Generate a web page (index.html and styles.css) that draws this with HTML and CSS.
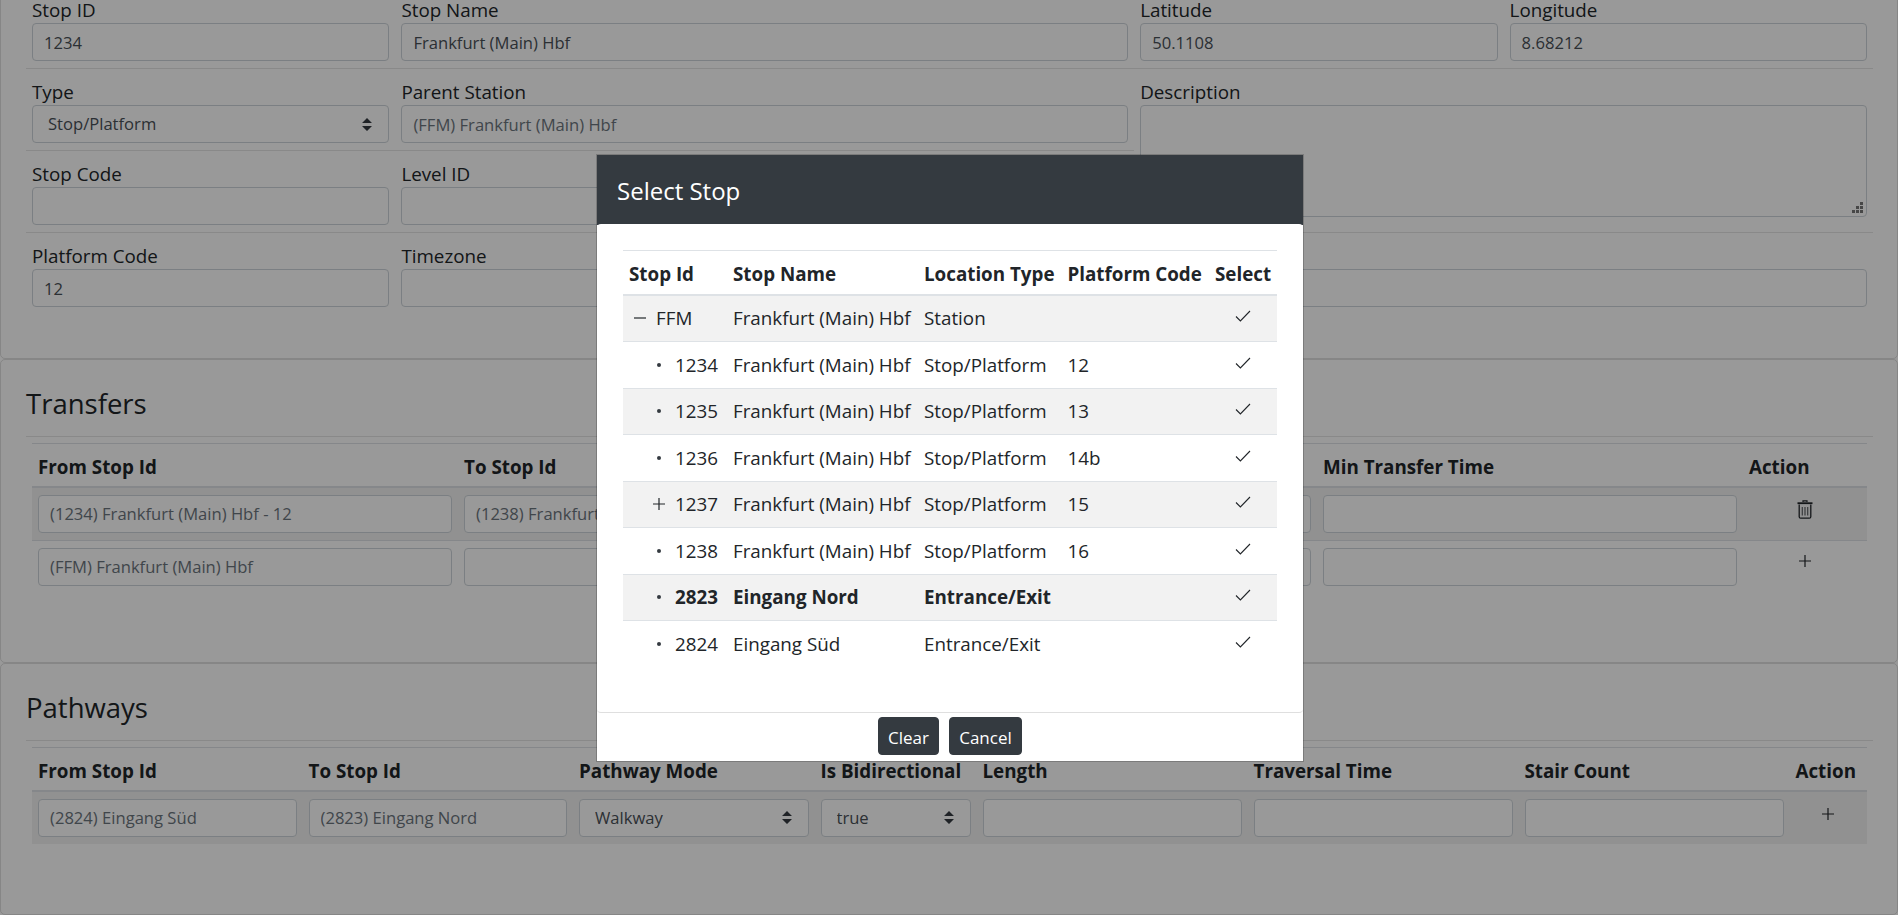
FILE: index.html

```html
<!DOCTYPE html>
<html lang="en">
<head>
  <meta charset="UTF-8">
  <meta name="viewport" content="width=device-width, initial-scale=1.0">
  <title>Stop Editor</title>
  <link rel="stylesheet" href="styles.css">
</head>
<body>
  <div class="page">
    <section class="card card-stop">
      <div class="form-grid">
        <div class="field"><label>Stop ID</label><input class="control" value="1234"></div>
        <div class="field span-2"><label>Stop Name</label><input class="control" value="Frankfurt (Main) Hbf"></div>
        <div class="field"><label>Latitude</label><input class="control" value="50.1108"></div>
        <div class="field"><label>Longitude</label><input class="control" value="8.68212"></div>
      </div>
      <hr class="rule">
      <div class="form-split">
        <div class="form-left">
          <div class="form-grid-3">
            <div class="field">
              <label>Type</label>
              <select class="control select"><option>Stop/Platform</option></select>
            </div>
            <div class="field span-2"><label>Parent Station</label><input class="control muted" value="(FFM) Frankfurt (Main) Hbf"></div>
          </div>
          <hr class="rule">
          <div class="form-grid-3">
            <div class="field"><label>Stop Code</label><input class="control"></div>
            <div class="field span-2"><label>Level ID</label><input class="control"></div>
          </div>
        </div>
        <div class="field form-right">
          <label>Description</label>
          <textarea class="control description"></textarea>
        </div>
      </div>
      <hr class="rule">
      <div class="form-grid">
        <div class="field"><label>Platform Code</label><input class="control" value="12"></div>
        <div class="field span-2"><label>Timezone</label><input class="control"></div>
        <div class="field span-2"><label></label><input class="control"></div>
      </div>
    </section>

    <section class="card card-list">
      <h3>Transfers</h3>
      <hr class="rule rule-title">
      <table class="grid-table transfers">
        <colgroup>
          <col class="t-from"><col class="t-to"><col class="t-type"><col class="t-from"><col>
        </colgroup>
        <thead>
          <tr><th>From Stop Id</th><th>To Stop Id</th><th></th><th>Min Transfer Time</th><th>Action</th></tr>
        </thead>
        <tbody>
          <tr>
            <td><input class="control muted" value="(1234) Frankfurt (Main) Hbf - 12"></td>
            <td><input class="control muted" value="(1238) Frankfurt (Main) Hbf - 16"></td>
            <td><input class="control"></td>
            <td><input class="control"></td>
            <td class="action">
              <svg class="icon-trash" width="16" height="19" viewBox="0 0 16 19" fill="none" stroke="currentColor">
                <path d="M6 2V.8h4V2" stroke-width="1.2"/>
                <path d="M.5 3.2h15" stroke-width="1.8"/>
                <path d="M2.2 4.5v12.2c0 .9.6 1.5 1.5 1.5h8.6c.9 0 1.5-.6 1.5-1.5V4.5" stroke-width="1.3"/>
                <path d="M5.3 7v8.5M8 7v8.5M10.7 7v8.5" stroke-width="1.2" opacity=".7"/>
              </svg>
            </td>
          </tr>
          <tr>
            <td><input class="control muted" value="(FFM) Frankfurt (Main) Hbf"></td>
            <td><input class="control"></td>
            <td><input class="control"></td>
            <td><input class="control"></td>
            <td class="action">
              <svg class="icon-plus" width="12" height="12" viewBox="0 0 12 12"><path d="M6 0v12M0 6h12" stroke="currentColor" stroke-width="1.2"/></svg>
            </td>
          </tr>
        </tbody>
      </table>
    </section>

    <section class="card card-list card-last">
      <h3>Pathways</h3>
      <hr class="rule rule-title">
      <table class="grid-table pathways">
        <colgroup>
          <col class="p-wide"><col class="p-wide"><col class="p-mode"><col class="p-bidi"><col class="p-tail"><col class="p-tail"><col class="p-tail"><col>
        </colgroup>
        <thead>
          <tr><th>From Stop Id</th><th>To Stop Id</th><th>Pathway Mode</th><th>Is Bidirectional</th><th>Length</th><th>Traversal Time</th><th>Stair Count</th><th>Action</th></tr>
        </thead>
        <tbody>
          <tr>
            <td><input class="control muted" value="(2824) Eingang Süd"></td>
            <td><input class="control muted" value="(2823) Eingang Nord"></td>
            <td><select class="control select"><option>Walkway</option></select></td>
            <td><select class="control select"><option>true</option></select></td>
            <td><input class="control"></td>
            <td><input class="control"></td>
            <td><input class="control"></td>
            <td class="action">
              <svg class="icon-plus" width="12" height="12" viewBox="0 0 12 12"><path d="M6 0v12M0 6h12" stroke="currentColor" stroke-width="1.2"/></svg>
            </td>
          </tr>
        </tbody>
      </table>
    </section>
  </div>

  <div class="backdrop"></div>

  <div class="modal">
    <header class="modal-header">Select Stop</header>
    <div class="modal-body">
      <table class="stop-table">
        <colgroup>
          <col class="s-id"><col class="s-name"><col class="s-type"><col class="s-code"><col>
        </colgroup>
        <thead>
          <tr><th>Stop Id</th><th>Stop Name</th><th>Location Type</th><th>Platform Code</th><th>Select</th></tr>
        </thead>
        <tbody>
          <tr>
            <td><span class="tree tree-root"><svg class="tree-icon" width="12" height="12" viewBox="0 0 12 12"><path d="M0 6h12" stroke="currentColor" stroke-width="1.2"/></svg>FFM</span></td>
            <td>Frankfurt (Main) Hbf</td><td>Station</td><td></td>
            <td class="pick"><svg width="16" height="12" viewBox="0 0 16 12" fill="none"><path d="M1 6.5l4.4 4.4L15 1" stroke="currentColor" stroke-width="1.1"/></svg></td>
          </tr>
          <tr>
            <td><span class="tree"><span class="tree-icon tree-dot"></span>1234</span></td>
            <td>Frankfurt (Main) Hbf</td><td>Stop/Platform</td><td>12</td>
            <td class="pick"><svg width="16" height="12" viewBox="0 0 16 12" fill="none"><path d="M1 6.5l4.4 4.4L15 1" stroke="currentColor" stroke-width="1.1"/></svg></td>
          </tr>
          <tr>
            <td><span class="tree"><span class="tree-icon tree-dot"></span>1235</span></td>
            <td>Frankfurt (Main) Hbf</td><td>Stop/Platform</td><td>13</td>
            <td class="pick"><svg width="16" height="12" viewBox="0 0 16 12" fill="none"><path d="M1 6.5l4.4 4.4L15 1" stroke="currentColor" stroke-width="1.1"/></svg></td>
          </tr>
          <tr>
            <td><span class="tree"><span class="tree-icon tree-dot"></span>1236</span></td>
            <td>Frankfurt (Main) Hbf</td><td>Stop/Platform</td><td>14b</td>
            <td class="pick"><svg width="16" height="12" viewBox="0 0 16 12" fill="none"><path d="M1 6.5l4.4 4.4L15 1" stroke="currentColor" stroke-width="1.1"/></svg></td>
          </tr>
          <tr>
            <td><span class="tree"><svg class="tree-icon" width="12" height="12" viewBox="0 0 12 12"><path d="M6 0v12M0 6h12" stroke="currentColor" stroke-width="1.2"/></svg>1237</span></td>
            <td>Frankfurt (Main) Hbf</td><td>Stop/Platform</td><td>15</td>
            <td class="pick"><svg width="16" height="12" viewBox="0 0 16 12" fill="none"><path d="M1 6.5l4.4 4.4L15 1" stroke="currentColor" stroke-width="1.1"/></svg></td>
          </tr>
          <tr>
            <td><span class="tree"><span class="tree-icon tree-dot"></span>1238</span></td>
            <td>Frankfurt (Main) Hbf</td><td>Stop/Platform</td><td>16</td>
            <td class="pick"><svg width="16" height="12" viewBox="0 0 16 12" fill="none"><path d="M1 6.5l4.4 4.4L15 1" stroke="currentColor" stroke-width="1.1"/></svg></td>
          </tr>
          <tr class="current">
            <td><span class="tree"><span class="tree-icon tree-dot"></span>2823</span></td>
            <td>Eingang Nord</td><td>Entrance/Exit</td><td></td>
            <td class="pick"><svg width="16" height="12" viewBox="0 0 16 12" fill="none"><path d="M1 6.5l4.4 4.4L15 1" stroke="currentColor" stroke-width="1.1"/></svg></td>
          </tr>
          <tr>
            <td><span class="tree"><span class="tree-icon tree-dot"></span>2824</span></td>
            <td>Eingang Süd</td><td>Entrance/Exit</td><td></td>
            <td class="pick"><svg width="16" height="12" viewBox="0 0 16 12" fill="none"><path d="M1 6.5l4.4 4.4L15 1" stroke="currentColor" stroke-width="1.1"/></svg></td>
          </tr>
        </tbody>
      </table>
    </div>
    <footer class="modal-footer">
      <button class="btn btn-clear">Clear</button>
      <button class="btn btn-cancel">Cancel</button>
    </footer>
  </div>
</body>
</html>
```

FILE: styles.css

```css
html, body { height: 100%; }
body { margin: 0; height: 915px; overflow: hidden; background: #fff; color: #212529; font-family: "Open Sans", sans-serif; font-size: 18.8px; line-height: 24px; }

/* the page is scrolled down a little, first card starts above the window */
.page { margin-top: -30px; }

.card { border: 1px solid rgba(0, 0, 0, .125); border-radius: 5px; padding: 27px 24px 0 25px; box-sizing: border-box; }
.card-stop { height: 389px; padding-top: 27px; }
.card-list { height: 304px; }
.card-last { height: 252px; }

.rule { border: 0; border-top: 1px solid rgba(0, 0, 0, .1); margin: 7px 0 11px; }
.rule-title { margin: 15px 0 6px; }

.form-grid { display: grid; grid-template-columns: repeat(5, 1fr); gap: 12px; padding: 0 6px; }
.form-grid-3 { display: grid; grid-template-columns: repeat(3, 1fr); gap: 12px; padding: 0 6px; }
.form-split { display: grid; grid-template-columns: 3fr 2fr; }
.form-right { padding: 0 6px; }
.span-2 { grid-column: span 2; }
.field label { display: block; height: 24px; margin-bottom: 1px; white-space: nowrap; }

.control { display: block; width: 100%; height: 38px; box-sizing: border-box; padding: 0 11px; border: 1px solid #ced4da; border-radius: 4px; background: #fff; color: #495057; font: 16.6px/24px "Open Sans", sans-serif; }
.muted { color: #6c757d; }
.select { appearance: none; -webkit-appearance: none; padding-left: 15px; background: #fff url("data:image/svg+xml,%3Csvg xmlns='http://www.w3.org/2000/svg' width='10' height='13' viewBox='0 0 10 13'%3E%3Cpath fill='%23343a40' d='M5 0L0 5h10zM5 13L0 8h10z'/%3E%3C/svg%3E") no-repeat right 16px center; }
.description { height: 112px; resize: none; background: #fff url("data:image/svg+xml,%3Csvg xmlns='http://www.w3.org/2000/svg' width='11' height='11' fill='%23777'%3E%3Crect x='8' y='0' width='3' height='3'/%3E%3Crect x='4' y='4' width='3' height='3'/%3E%3Crect x='8' y='4' width='3' height='3'/%3E%3Crect x='0' y='8' width='3' height='3'/%3E%3Crect x='4' y='8' width='3' height='3'/%3E%3Crect x='8' y='8' width='3' height='3'/%3E%3C/svg%3E") no-repeat right 3px bottom 3px; }

h3 { margin: 0; font-weight: 400; font-size: 27.5px; line-height: 34px; }

.grid-table { width: 1835px; margin-left: 6px; border-collapse: collapse; table-layout: fixed; border-top: 1px solid #dee2e6; }
.grid-table th { height: 43px; padding: 4px 6px 0; box-sizing: border-box; text-align: left; font-weight: 700; border-bottom: 2px solid #dee2e6; white-space: nowrap; }
.grid-table td { padding: 7px 6px; vertical-align: top; }
.grid-table tbody tr:nth-child(odd) { background: rgba(0, 0, 0, .05); }
.grid-table tbody tr + tr td { border-top: 1px solid #dee2e6; }
.grid-table .action { text-align: center; color: #212529; }
.icon-trash { display: block; margin: 5px auto 0; }
.icon-plus { display: block; margin: 9px auto 0; }
.grid-table tr + tr .icon-plus { margin-top: 7px; }

.t-from { width: 426px; }
.t-to { width: 430px; }
.t-type { width: 429px; }
.p-wide { width: 270.5px; }
.p-mode { width: 241.5px; }
.p-bidi { width: 162px; }
.p-tail { width: 271px; }

/* dialog on top */
.backdrop { position: fixed; inset: 0; background: rgba(0, 0, 0, .4); }
.modal { position: fixed; left: 596px; top: 154px; width: 708px; height: 608px; box-sizing: border-box; border: 1px solid rgba(0, 0, 0, .2); background: #fff; background-clip: padding-box; display: flex; flex-direction: column; }
.modal-header { height: 70px; flex: none; padding: 0 20px; background: #343a40; color: #fff; font-size: 24px; line-height: 72px; }
.modal-body { flex: 1; padding: 26px 26px 0; border-bottom: 1px solid #dfdfdf; border-radius: 4px; margin-top: -1px; background: #fff; }
.modal-footer { flex: none; height: 48px; display: flex; justify-content: center; align-items: flex-start; gap: 10px; padding-top: 4px; box-sizing: border-box; }

.stop-table { width: 654px; border-collapse: collapse; table-layout: fixed; border-top: 1px solid #dee2e6; }
.stop-table th { height: 44px; padding: 3px 6px 0; box-sizing: border-box; text-align: left; border-bottom: 2px solid #dee2e6; white-space: nowrap; }
.stop-table td { padding: 10.75px 6px; white-space: nowrap; border-top: 1px solid #dee2e6; }
.stop-table tbody tr:first-child td { border-top: 0; }
.stop-table tbody tr:nth-child(odd) { background: #f2f2f2; }
.stop-table .current td { font-weight: 700; }
.stop-table .pick { text-align: center; padding-right: 6px; }
.pick svg { display: inline-block; vertical-align: top; margin-top: 4px; }

.s-id { width: 104px; }
.s-name { width: 191px; }
.s-type { width: 143.5px; }
.s-code { width: 147.5px; }

.tree { display: flex; align-items: center; padding-left: 24px; gap: 10px; }
.tree-root { padding-left: 5px; }
.tree-icon { flex: none; width: 12px; height: 12px; display: block; }
.tree-dot { position: relative; }
.tree-dot::before { content: ""; position: absolute; left: 4px; top: 4px; width: 4px; height: 4px; border-radius: 50%; background: #343a40; }

.btn { height: 38px; padding: 2px 0 0; border: 1px solid #343a40; border-radius: 4px; background: #343a40; color: #fff; font: 17px "Open Sans", sans-serif; }
.btn-clear { width: 61px; }
.btn-cancel { width: 73px; }
```
